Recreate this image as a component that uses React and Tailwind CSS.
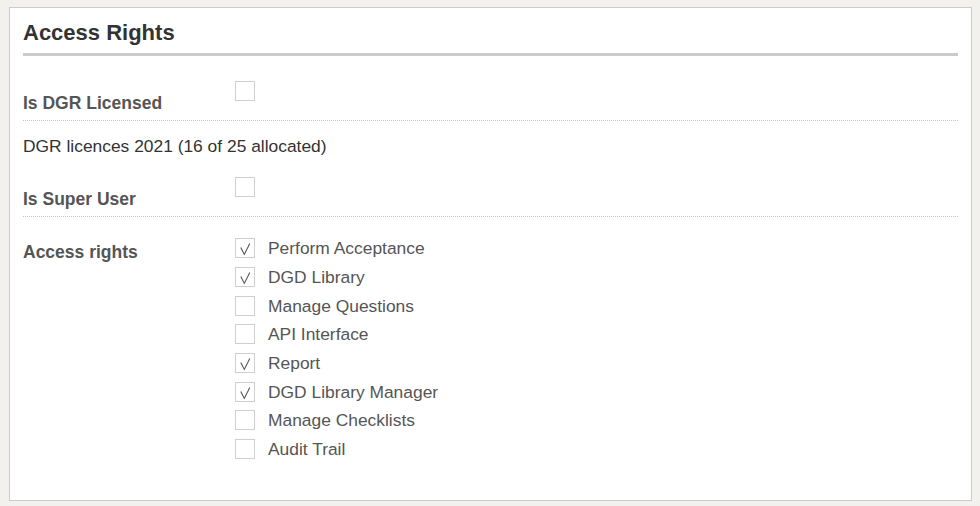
const rights = [
  { label: "Perform Acceptance", checked: true },
  { label: "DGD Library", checked: true },
  { label: "Manage Questions", checked: false },
  { label: "API Interface", checked: false },
  { label: "Report", checked: true },
  { label: "DGD Library Manager", checked: true },
  { label: "Manage Checklists", checked: false },
  { label: "Audit Trail", checked: false },
];

function Box({ checked }) {
  return (
    <span className="flex h-[20px] w-[20px] shrink-0 items-center justify-center border border-[#cfcfcf] bg-white">
      {checked && (
        <svg width="18" height="18" viewBox="0 0 18 18" fill="none">
          <path d="M4.8 8.6 L8.3 15.4 L13.8 4.4" stroke="#555" strokeWidth="1.1" />
        </svg>
      )}
    </span>
  );
}

export default function App() {
  return (
    <div className="min-h-[506px] bg-[#f2f1ed] pl-[9px] pr-[8px] pt-[7px] pb-[5px] font-['Liberation_Sans',Arial,sans-serif]">
      <div className="h-[494px] border border-[#cbcbcb] bg-white px-[13px] pt-[12px]">
        <h2 className="border-b-[3px] border-[#cbcbcb] pb-[7px] text-[22px] font-bold leading-[26px] text-[#333]">
          Access Rights
        </h2>

        {/* licensed */}
        <div className="flex border-b border-dotted border-[#c4c4c4] pt-[25px] pb-[7px]">
          <div className="mt-[12px] w-[212px] text-[17.5px] font-bold leading-[20px] text-[#555]">Is DGR Licensed</div>
          <Box checked={false} />
        </div>

        <div className="mt-[15px] text-[17.4px] leading-[20px] text-[#333]">
          DGR licences 2021 (16 of 25 allocated)
        </div>

        {/* super user */}
        <div className="flex border-b border-dotted border-[#c4c4c4] pt-[21px] pb-[7px]">
          <div className="mt-[12px] w-[212px] text-[17.5px] font-bold leading-[20px] text-[#555]">Is Super User</div>
          <Box checked={false} />
        </div>

        {/* rights list */}
        <div className="flex pt-[17px]">
          <div className="mt-[8px] w-[212px] text-[17.5px] font-bold leading-[20px] text-[#555]">Access rights</div>
          <div className="flex flex-col">
            {rights.map((r) => (
              <label key={r.label} className="flex h-[28.7px] items-center gap-[13px]">
                <Box checked={r.checked} />
                <span className="text-[17.4px] leading-[20px] text-[#555]">{r.label}</span>
              </label>
            ))}
          </div>
        </div>
      </div>
    </div>
  );
}
